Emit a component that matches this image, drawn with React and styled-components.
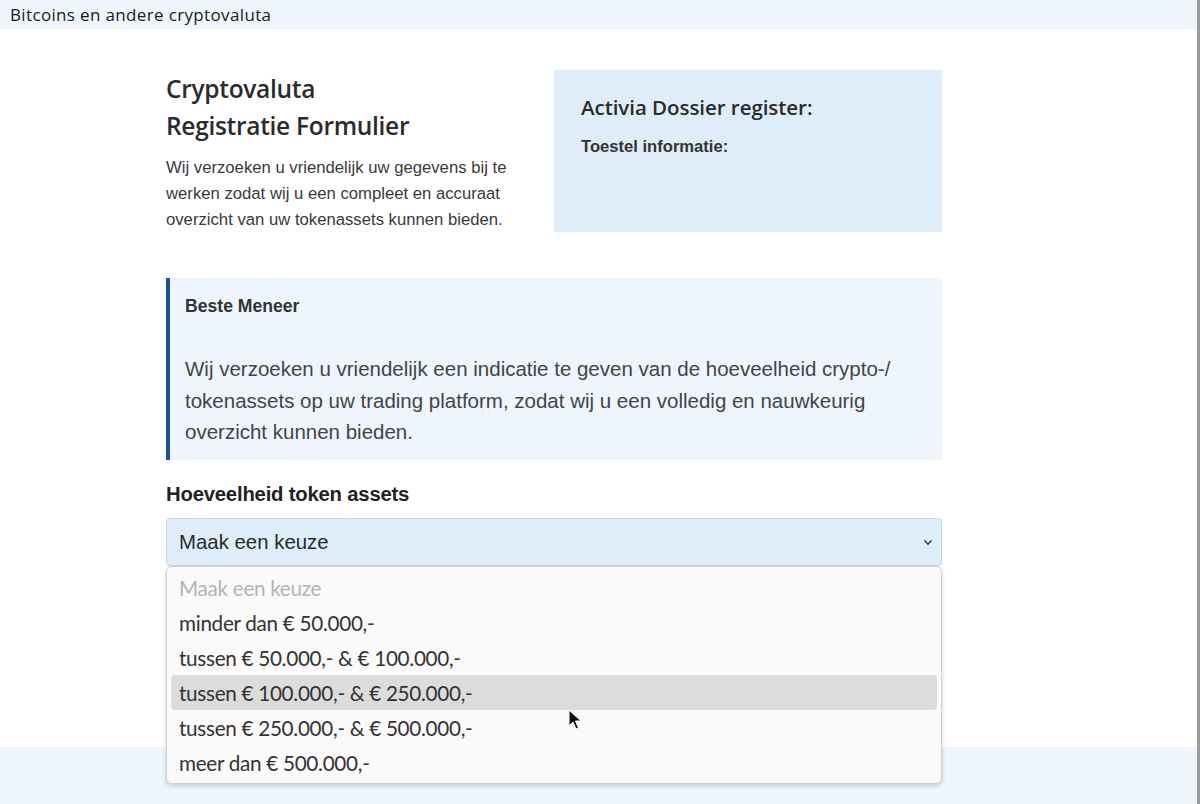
import React from "react";
import styled, { createGlobalStyle } from "styled-components";

const Global = createGlobalStyle`
  html, body { margin: 0; padding: 0; background: #fff; }
  body { font-family: "Liberation Sans", Arial, sans-serif; color: #333; }
  * { box-sizing: border-box; }
`;

const Page = styled.div`
  position: relative;
  width: 1200px;
  min-height: 804px;
  border-right: 3px solid #9a9a9a;
  overflow: hidden;
`;

const TopBar = styled.div`
  height: 29px;
  background: #eef5fc;
  padding-left: 10px;
  display: flex;
  align-items: center;
  font-family: "Open Sans", "Lato", sans-serif;
  font-size: 17px;
  letter-spacing: 0.35px;
  color: #1b1b1b;
`;

const Main = styled.main`
  padding: 41px 0 181px 166px;
`;

const Column = styled.div`
  width: 776px;
  position: relative;
`;

const Header = styled.div`
  display: grid;
  grid-template-columns: 1fr 388px;
  column-gap: 39px;
  align-items: start;
`;

const Intro = styled.div``;

const Title = styled.h1`
  margin: 0 0 11px;
  font-family: "Open Sans", "Lato", sans-serif;
  font-weight: 600;
  font-size: 24.5px;
  line-height: 37px;
  color: #2b2b2b;
  letter-spacing: -0.3px;
`;

const Lead = styled.p`
  margin: 0;
  font-size: 16.7px;
  line-height: 26px;
  color: #3a3a3a;
`;

const InfoBox = styled.aside`
  height: 162px;
  background: #deedf7;
  padding: 22px 27px;
`;

const InfoTitle = styled.h2`
  margin: 0 0 15px;
  font-family: "Open Sans", "Lato", sans-serif;
  font-weight: 600;
  font-size: 20.5px;
  line-height: 30px;
  color: #2b2b2b;
  letter-spacing: -0.05px;
`;

const InfoLabel = styled.div`
  font-weight: 700;
  font-size: 16.6px;
  line-height: 20px;
  color: #333;
`;

const Notice = styled.section`
  margin-top: 45px;
  background: #eef5fc;
  border-left: 4px solid #1d5390;
  padding: 16px 20px 12px 15px;
  height: 182px;
`;

const NoticeTitle = styled.div`
  font-weight: 700;
  font-size: 17.6px;
  line-height: 24px;
  color: #333;
  margin-bottom: 35px;
`;

const NoticeText = styled.p`
  margin: 0;
  font-size: 20.5px;
  line-height: 31.5px;
  color: #444;
`;

const FieldLabel = styled.label`
  display: block;
  margin-top: 22px;
  font-weight: 700;
  font-size: 20.3px;
  line-height: 24px;
  color: #222;
  letter-spacing: -0.2px;
`;

const SelectWrap = styled.div`
  position: relative;
  margin-top: 12px;
`;

const Select = styled.div`
  height: 48px;
  background: #deedf7;
  border: 1px solid #c9d6df;
  border-radius: 4px;
  display: flex;
  align-items: center;
  justify-content: space-between;
  padding: 0 7px 0 12px;
  font-size: 20.4px;
  color: #2b2b2b;
`;

const Menu = styled.ul`
  position: absolute;
  left: 0;
  right: 0;
  top: 100%;
  margin: 0;
  padding: 3px 4px 3px;
  list-style: none;
  background: #fafafa;
  border: 1px solid #d2d2d2;
  border-radius: 6px;
  box-shadow: 0 2px 4px rgba(0, 0, 0, 0.18);
  z-index: 2;
`;

const Option = styled.li`
  height: 35px;
  display: flex;
  align-items: center;
  padding-left: 8px;
  border-radius: 4px;
  font-family: "Lato", "Open Sans", sans-serif;
  font-size: 20.7px;
  letter-spacing: -0.3px;
  color: ${(p) => (p.$muted ? "#b4b4b4" : "#333")};
  background: ${(p) => (p.$active ? "#dcdcdc" : "transparent")};
`;

const Footer = styled.footer`
  height: 58px;
  background: #eef5fc;
`;

const Cursor = styled.svg`
  position: absolute;
  left: 568px;
  top: 709px;
  z-index: 5;
`;

const options = [
  "Maak een keuze",
  "minder dan € 50.000,-",
  "tussen € 50.000,- & € 100.000,-",
  "tussen € 100.000,- & € 250.000,-",
  "tussen € 250.000,- & € 500.000,-",
  "meer dan € 500.000,-",
];

export default function App() {
  return (
    <Page>
      <Global />
      <TopBar>Bitcoins en andere cryptovaluta</TopBar>
      <Main>
        <Column>
          <Header>
            <Intro>
              <Title>
                Cryptovaluta
                <br />
                Registratie Formulier
              </Title>
              <Lead>
                Wij verzoeken u vriendelijk uw gegevens bij te werken zodat wij u een compleet en
                accuraat overzicht van uw tokenassets kunnen bieden.
              </Lead>
            </Intro>
            <InfoBox>
              <InfoTitle>Activia Dossier register:</InfoTitle>
              <InfoLabel>Toestel informatie:</InfoLabel>
            </InfoBox>
          </Header>
          <Notice>
            <NoticeTitle>Beste Meneer</NoticeTitle>
            <NoticeText>
              Wij verzoeken u vriendelijk een indicatie te geven van de hoeveelheid crypto-/
              tokenassets op uw trading platform, zodat wij u een volledig en nauwkeurig overzicht
              kunnen bieden.
            </NoticeText>
          </Notice>
          <FieldLabel>Hoeveelheid token assets</FieldLabel>
          <SelectWrap>
            <Select>
              <span>Maak een keuze</span>
              <svg width="12" height="12" viewBox="0 0 12 12">
                <path d="M2.5 4.5 L6 8 L9.5 4.5" fill="none" stroke="#444" strokeWidth="1.6" />
              </svg>
            </Select>
            <Menu>
              {options.map((o, i) => (
                <Option key={o} $muted={i === 0} $active={i === 3}>
                  {o}
                </Option>
              ))}
            </Menu>
          </SelectWrap>
        </Column>
      </Main>
      <Footer />
      <Cursor width="14" height="22" viewBox="0 0 14 22">
        <path d="M1 1 L1 17 L5 13 L8 20 L10.5 19 L7.5 12 L13 12 Z" fill="#111" stroke="#fff" strokeWidth="1" />
      </Cursor>
    </Page>
  );
}
